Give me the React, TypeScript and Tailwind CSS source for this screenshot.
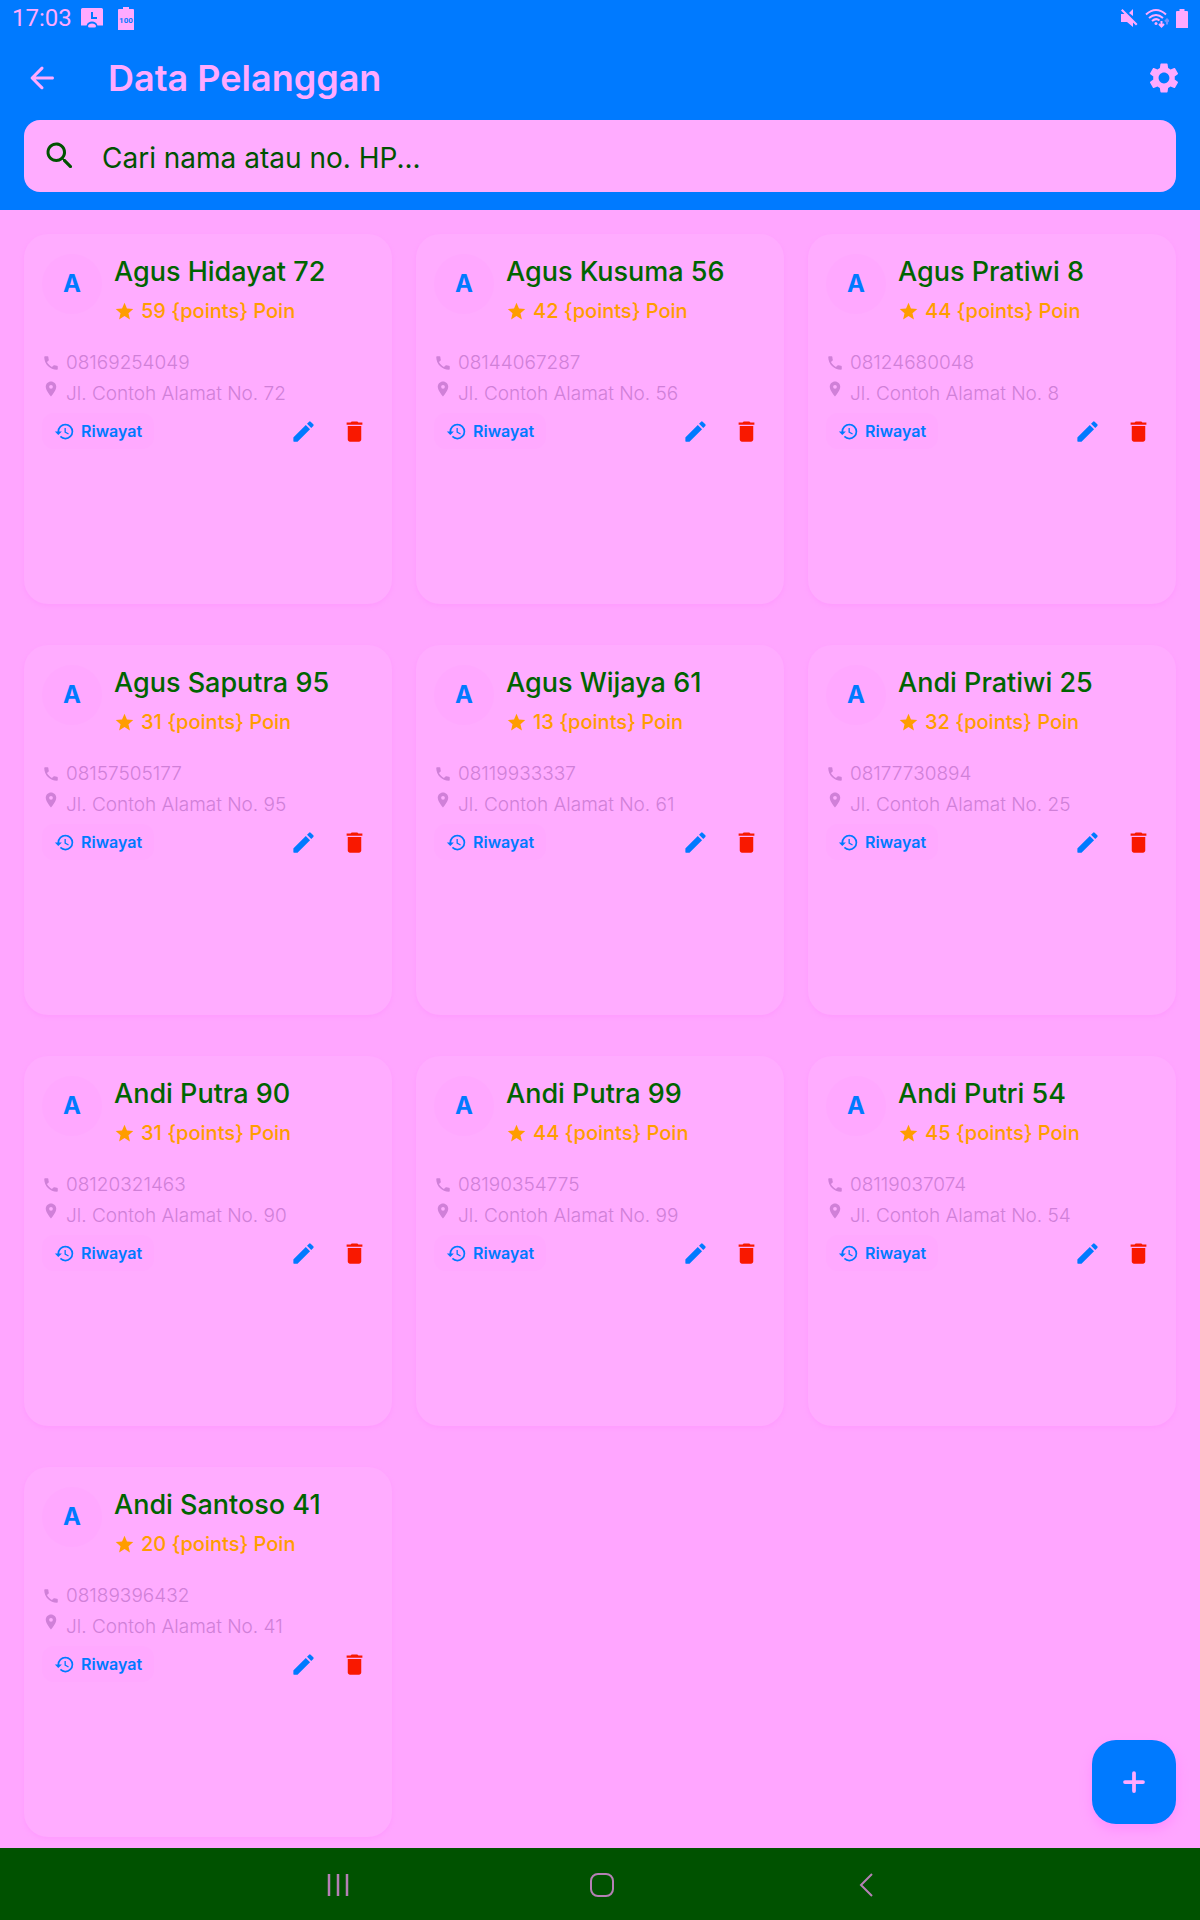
import { useState } from "react";
import { MdDelete, MdHistory, MdLocationOn, MdPhone, MdSettings, MdStar } from "react-icons/md";

type Customer = {
    name: string;
    points: number;
    phone: string;
    address: string;
};

const customers: Customer[] = [
    { name: "Agus Hidayat 72", points: 59, phone: "08169254049", address: "Jl. Contoh Alamat No. 72" },
    { name: "Agus Kusuma 56", points: 42, phone: "08144067287", address: "Jl. Contoh Alamat No. 56" },
    { name: "Agus Pratiwi 8", points: 44, phone: "08124680048", address: "Jl. Contoh Alamat No. 8" },
    { name: "Agus Saputra 95", points: 31, phone: "08157505177", address: "Jl. Contoh Alamat No. 95" },
    { name: "Agus Wijaya 61", points: 13, phone: "08119933337", address: "Jl. Contoh Alamat No. 61" },
    { name: "Andi Pratiwi 25", points: 32, phone: "08177730894", address: "Jl. Contoh Alamat No. 25" },
    { name: "Andi Putra 90", points: 31, phone: "08120321463", address: "Jl. Contoh Alamat No. 90" },
    { name: "Andi Putra 99", points: 44, phone: "08190354775", address: "Jl. Contoh Alamat No. 99" },
    { name: "Andi Putri 54", points: 45, phone: "08119037074", address: "Jl. Contoh Alamat No. 54" },
    { name: "Andi Santoso 41", points: 20, phone: "08189396432", address: "Jl. Contoh Alamat No. 41" },
];

function BackIcon() {
    return (
        <svg viewBox="0 0 24 24" className="size-9" fill="currentColor" aria-hidden="true">
            <path d="M19 11H7.83l4.88-4.88c.39-.39.39-1.03 0-1.42a.996.996 0 0 0-1.41 0l-6.59 6.59c-.39.39-.39 1.02 0 1.41l6.59 6.59c.39.39 1.02.39 1.41 0 .39-.39.39-1.02 0-1.41L7.83 13H19c.55 0 1-.45 1-1s-.45-1-1-1z" />
        </svg>
    );
}

function SearchIcon() {
    return (
        <svg viewBox="0 0 24 24" className="size-9 shrink-0" fill="currentColor" aria-hidden="true">
            <path d="M15.5 14h-.79l-.28-.27a6.5 6.5 0 0 0 1.48-5.34c-.47-2.78-2.79-5-5.59-5.34a6.505 6.505 0 0 0-7.27 7.27c.34 2.8 2.56 5.12 5.34 5.59a6.5 6.5 0 0 0 5.34-1.48l.27.28v.79l4.25 4.25c.41.41 1.08.41 1.49 0 .41-.41.41-1.08 0-1.49L15.5 14zm-6 0C7.01 14 5 11.99 5 9.5S7.01 5 9.5 5 14 7.01 14 9.5 11.99 14 9.5 14z" />
        </svg>
    );
}

function EditIcon() {
    return (
        <svg viewBox="0 0 24 24" className="size-[27px]" fill="currentColor" aria-hidden="true">
            <path d="M3 17.46v3.04c0 .28.22.5.5.5h3.04c.13 0 .26-.05.35-.15L17.81 9.94l-3.75-3.75L3.15 17.1c-.1.1-.15.22-.15.36zM20.71 7.04a.996.996 0 0 0 0-1.41l-2.34-2.34a.996.996 0 0 0-1.41 0l-1.83 1.83 3.75 3.75 1.83-1.83z" />
        </svg>
    );
}

function StatusBar() {
    return (
        <div className="flex h-9 items-center justify-between px-3 text-[#ffaaff]">
            <div className="flex items-center">
                <span className="font-[Roboto,sans-serif] text-2xl leading-9">17:03</span>
                {/* screen + battery notifications */}
                <svg viewBox="0 0 22 20" className="ml-[9px] h-5 w-[22px]" aria-hidden="true">
                    <path fill="currentColor" d="M1.5 0h19Q22 0 22 1.500V17.500H16.500C15.500 14.500 13.500 13.500 11 13.500S6.500 14.500 5.500 17.500H0V1.500Q0 0 1.500 0z" />
                    <path fill="none" stroke="#007aff" strokeWidth="2" d="M11 4V10H16" />
                    <path fill="currentColor" d="M7 18Q7.500 15.500 11 15.500T15 18Q15 19.500 13.500 19.500H8.500Q7 19.500 7 18z" />
                </svg>
                <svg viewBox="0 0 16 23" className="ml-[15px] h-[23px] w-4" aria-hidden="true">
                    <path fill="currentColor" d="M5 0h6v2h4q1 0 1 1v20H0V3q0-1 1-1h4z" />
                    <text x="8" y="16" textAnchor="middle" fontSize="8" fontWeight="700" fontFamily="Roboto, sans-serif" fill="#007aff">100</text>
                </svg>
            </div>
            <div className="flex items-center gap-[7px]">
                <svg viewBox="0 0 18 20" className="h-5 w-[18px]" aria-hidden="true">
                    <path fill="currentColor" d="M1 6h4l8 8v5l-6-5H1zM13 1v7L9 5zM2.500 1l15 15-1.500 1.500L1 2.500z" />
                </svg>
                <svg viewBox="0 0 24 20" className="h-5 w-6" aria-hidden="true">
                    <g fill="none" stroke="currentColor" strokeWidth="2">
                        <path d="M1 6.500Q11 -2.500 21 6.500" />
                        <path d="M4 10Q11 4 18 10" />
                        <path d="M7 13Q11 9.500 14.500 12.500" />
                        <path d="M16.500 13v5.500M14 16l2.500 2.500L19 16" />
                        <path opacity=".45" d="M22 16.500v-5M20 13.500l2-2 2 2" />
                    </g>
                    <circle cx="11" cy="15.500" r="1.500" fill="currentColor" />
                </svg>
                <svg viewBox="0 0 12 19" className="h-[19px] w-3" aria-hidden="true">
                    <path fill="currentColor" d="M3.500 0h5v2H11q1 0 1 1v16H0V3q0-1 1-1h2.500z" />
                </svg>
            </div>
        </div>
    );
}

function CustomerCard({ customer }: { customer: Customer }) {
    return (
        <article className="h-[370px] rounded-3xl bg-[#ffacff] px-[18px] py-5 shadow-[0_2px_4px_#ff9bff]">
            <div className="flex gap-3">
                <div className="flex size-[60px] shrink-0 items-center justify-center rounded-full bg-[#ffa8ff] text-2xl font-bold text-[#007aff]">
                    {customer.name[0]}
                </div>
                <div>
                    <h2 className="text-[27px] font-medium leading-9 text-[#006400]">{customer.name}</h2>
                    <p className="mt-[7px] flex items-center gap-[6px] text-xl font-medium leading-7 text-[#ff9d00]">
                        <MdStar className="size-[21px]" />
                        {customer.points} {"{points}"} Poin
                    </p>
                </div>
            </div>
            <div className="mt-[22px] text-[19px] font-light leading-[31px] text-[#d080d8]">
                <p className="flex items-center gap-[6px]">
                    <MdPhone className="size-[18px]" />
                    {customer.phone}
                </p>
                <p className="flex items-start gap-[6px]">
                    <MdLocationOn className="mt-[2px] size-[18px]" />
                    {customer.address}
                </p>
            </div>
            <div className="mt-1 flex items-center justify-between pr-[6px]">
                <button type="button" className="flex h-9 items-center gap-[6px] rounded-xl bg-[#ffa9ff] px-3 text-base font-semibold text-[#007aff]">
                    <MdHistory className="size-[21px]" />
                    Riwayat
                </button>
                <div className="flex gap-6">
                    <button type="button" aria-label={`Edit ${customer.name}`} className="text-[#007aff]">
                        <EditIcon />
                    </button>
                    <button type="button" aria-label={`Hapus ${customer.name}`} className="text-[#f91800]">
                        <MdDelete className="size-[27px]" />
                    </button>
                </div>
            </div>
        </article>
    );
}

export default function App() {
    const [query, setQuery] = useState("");

    const q = query.toLowerCase();
    const visible = customers.filter((c) => c.name.toLowerCase().includes(q) || c.phone.includes(q));

    return (
        <div className="relative flex min-h-screen flex-col bg-[#ffa6ff] font-[Inter,sans-serif]">
            {/* Header */}
            <header className="bg-[#007aff] pb-[18px]">
                <StatusBar />
                <div className="flex h-[84px] items-center pl-6 pr-[18px] text-[#ffaaff]">
                    <button type="button" aria-label="Kembali">
                        <BackIcon />
                    </button>
                    <h1 className="ml-12 flex-1 text-4xl font-semibold">Data Pelanggan</h1>
                    <button type="button" aria-label="Pengaturan">
                        <MdSettings className="size-9" />
                    </button>
                </div>
                <label className="mx-6 flex h-[72px] items-center gap-6 rounded-2xl bg-[#ffacff] px-[18px] text-[#005200]">
                    <SearchIcon />
                    <input
                        type="text"
                        aria-label="Cari pelanggan"
                        value={query}
                        onChange={(e) => setQuery(e.target.value)}
                        placeholder="Cari nama atau no. HP..."
                        className="min-w-0 flex-1 pt-1 text-[28px] outline-none placeholder:text-[#005200]"
                    />
                </label>
            </header>

            {/* Customer list */}
            <main className="grid flex-1 grid-cols-3 content-start gap-x-6 gap-y-[41px] px-6 pb-2 pt-6">
                {visible.map((c) => (
                    <CustomerCard key={c.phone} customer={c} />
                ))}
            </main>

            <button
                type="button"
                aria-label="Tambah pelanggan"
                className="absolute bottom-24 right-6 flex size-[84px] items-center justify-center rounded-3xl bg-[#007aff] text-[#ffaaff] shadow-[0_6px_12px_#ff90ff]"
            >
                <svg viewBox="0 0 24 24" className="size-9" fill="none" stroke="currentColor" strokeWidth="2.500" strokeLinecap="round" aria-hidden="true">
                    <path d="M12 6v12M6 12h12" />
                </svg>
            </button>

            {/* System navigation */}
            <nav className="flex h-[72px] items-center justify-center bg-[#005200] pl-1 pt-[2px] text-[#b580b5]">
                <button type="button" aria-label="Aplikasi terbaru" className="flex w-[264px] justify-center">
                    <svg viewBox="0 0 24 24" className="size-6" stroke="currentColor" strokeWidth="2.500" aria-hidden="true">
                        <path d="M3 1v22M12 1v22M21 1v22" />
                    </svg>
                </button>
                <button type="button" aria-label="Beranda" className="flex w-[264px] justify-center">
                    <svg viewBox="0 0 24 24" className="size-6" fill="none" stroke="currentColor" strokeWidth="2" aria-hidden="true">
                        <rect x="1" y="1" width="22" height="22" rx="7" />
                    </svg>
                </button>
                <button type="button" aria-label="Kembali ke layar sebelumnya" className="flex w-[264px] justify-center">
                    <svg viewBox="0 0 24 24" className="size-6" fill="none" stroke="currentColor" strokeWidth="2" aria-hidden="true">
                        <path d="M18 1L7 12l11 11" />
                    </svg>
                </button>
            </nav>
        </div>
    );
}
